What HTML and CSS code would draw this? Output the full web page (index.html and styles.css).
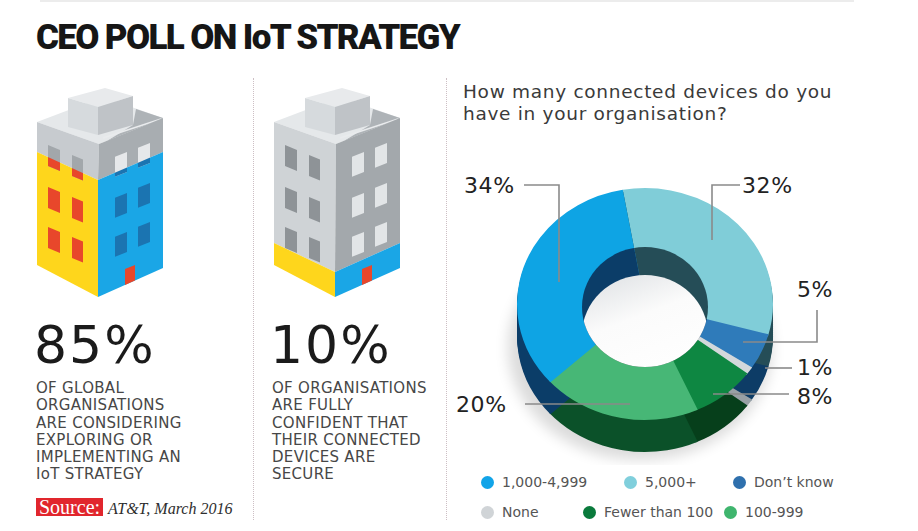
FILE: index.html
```html
<!DOCTYPE html>
<html lang="en">
<head>
<meta charset="utf-8">
<title>CEO Poll on IoT Strategy</title>
<link rel="stylesheet" href="styles.css">
</head>
<body>
<div class="topbar"></div>
<main class="page">
  <h1 class="title">CEO POLL ON IoT STRATEGY</h1>
  <div class="row">
    <section class="col col1">
      <svg class="bldg" viewBox="0 0 130 215" width="130" height="215">
        <defs>
          <clipPath id="b1L"><polygon points="0,67 61,95 61,212 0,180"/></clipPath>
          <clipPath id="b1R"><polygon points="61,95 126,67 126,183 61,212"/></clipPath>
        </defs>
        <polygon class="roof" points="0,37 66,12 126,33 62,59"/>
        <polygon class="wedge" points="99,24 126,33 70,56 96,40"/>
        <line class="roofline" x1="66" y1="53" x2="124" y2="34"/>
        <polygon class="box-top" points="31,13 68,3 96,11 61,22"/>
        <polygon class="box-l" points="31,13 61,22 61,50 31,42"/>
        <polygon class="box-r" points="61,22 96,11 96,40 61,50"/>
        <polygon class="b1-wl" points="0,37 62,59 61,95 0,67"/>
        <polygon class="yellow" points="0,67 61,95 61,212 0,180"/>
        <polygon class="b1-wr" points="62,59 126,33 126,67 61,95"/>
        <polygon class="blue" points="61,95 126,67 126,183 61,212"/>
        <g class="b1-winl-up">
          <polygon points="11,60 23,65 23,86 11,81"/>
          <polygon points="35,70 46,74.6 46,95.6 35,91"/>
        </g>
        <g class="red" clip-path="url(#b1L)">
          <polygon points="11,60 23,65 23,86 11,81"/>
          <polygon points="11,102 23,107 23,128 11,123"/>
          <polygon points="11,142 23,147 23,168 11,163"/>
          <polygon points="35,70 46,74.6 46,95.6 35,91"/>
          <polygon points="35,112 46,116.6 46,137.6 35,133"/>
          <polygon points="35,152 46,156.6 46,177.6 35,173"/>
        </g>
        <g class="b1-winr-up">
          <polygon points="78,71.8 90,67 90,87 78,91.8"/>
          <polygon points="101,62.8 113,58 113,78 101,82.8"/>
        </g>
        <g class="winblue" clip-path="url(#b1R)">
          <polygon points="78,71.8 90,67 90,87 78,91.8"/>
          <polygon points="78,112.8 90,108 90,128 78,132.8"/>
          <polygon points="78,151.8 90,147 90,167 78,171.8"/>
          <polygon points="101,62.8 113,58 113,78 101,82.8"/>
          <polygon points="101,102.8 113,98 113,118 101,122.8"/>
          <polygon points="101,141.8 113,137 113,157 101,161.8"/>
        </g>
        <polygon class="red" points="88,184 98,180 98,195.5 88,200"/>
      </svg>
      <div class="big">85%</div>
      <p class="desc">OF GLOBAL<br>ORGANISATIONS<br>ARE CONSIDERING<br>EXPLORING OR<br>IMPLEMENTING AN<br>IoT STRATEGY</p>
      <div class="source"><span class="src-tag">Source:</span><span class="src-text">AT&amp;T, March 2016</span></div>
    </section>

    <section class="col col2">
      <svg class="bldg bldg2" viewBox="0 0 130 215" width="130" height="215">
        <polygon class="roof" points="0,37 66,12 126,33 62,59"/>
        <polygon class="wedge" points="99,24 126,33 70,56 96,40"/>
        <line class="roofline" x1="66" y1="53" x2="124" y2="34"/>
        <polygon class="box-top" points="31,13 68,3 96,11 61,22"/>
        <polygon class="box-l" points="31,13 61,22 61,50 31,42"/>
        <polygon class="box-r" points="61,22 96,11 96,40 61,50"/>
        <polygon class="b2-wl" points="0,37 62,59 61,187 0,158"/>
        <polygon class="yellow" points="0,158 61,187 61,212 0,180"/>
        <polygon class="b2-wr" points="62,59 126,33 126,158 61,187"/>
        <polygon class="blue" points="61,187 126,158 126,183 61,212"/>
        <g class="b2-winl">
          <polygon points="11,60 23,65 23,86 11,81"/>
          <polygon points="11,102 23,107 23,128 11,123"/>
          <polygon points="11,142 23,147 23,168 11,163"/>
          <polygon points="35,70 46,74.6 46,95.6 35,91"/>
          <polygon points="35,112 46,116.6 46,137.6 35,133"/>
          <polygon points="35,152 46,156.6 46,177.6 35,173"/>
        </g>
        <g class="b2-winr">
          <polygon points="78,71.8 90,67 90,87 78,91.8"/>
          <polygon points="78,112.8 90,108 90,128 78,132.8"/>
          <polygon points="78,151.8 90,147 90,167 78,171.8"/>
          <polygon points="101,62.8 113,58 113,78 101,82.8"/>
          <polygon points="101,102.8 113,98 113,118 101,122.8"/>
          <polygon points="101,141.8 113,137 113,157 101,161.8"/>
        </g>
        <polygon class="red" points="88,184 98,180 98,195.5 88,200"/>
      </svg>
      <div class="big">10%</div>
      <p class="desc">OF ORGANISATIONS<br>ARE FULLY<br>CONFIDENT THAT<br>THEIR CONNECTED<br>DEVICES ARE<br>SECURE</p>
    </section>

    <section class="col col3">
      <p class="question">How many connected devices do you<br>have in your organisation?</p>
      <svg class="chart" viewBox="447 160 410 305" width="410" height="305">
        <defs>
          <filter id="soft" x="-30%" y="-30%" width="160%" height="160%"><feGaussianBlur stdDeviation="7"/></filter>
          <linearGradient id="holeGrad" x1="0" y1="0" x2="0.4" y2="1">
            <stop offset="0" stop-color="#dcdfe2"/>
            <stop offset="0.45" stop-color="#fbfbfb"/>
            <stop offset="1" stop-color="#ffffff"/>
          </linearGradient>
          <clipPath id="hole"><ellipse cx="645" cy="307" rx="63" ry="60"/></clipPath>
          <g id="pieDark" transform="translate(645 304) scale(1 0.906) rotate(-100)">
            <circle class="seg d32" r="64" pathLength="100" stroke-dasharray="32.3 100" stroke-dashoffset="0"/>
            <circle class="seg d5" r="64" pathLength="100" stroke-dasharray="5.3 100" stroke-dashoffset="-32"/>
            <circle class="seg d1" r="64" pathLength="100" stroke-dasharray="1.3 100" stroke-dashoffset="-37"/>
            <circle class="seg d8" r="64" pathLength="100" stroke-dasharray="8.3 100" stroke-dashoffset="-38"/>
            <circle class="seg d20" r="64" pathLength="100" stroke-dasharray="20.3 100" stroke-dashoffset="-46"/>
            <circle class="seg d34" r="64" pathLength="100" stroke-dasharray="34.3 100" stroke-dashoffset="-66"/>
          </g>
        </defs>
        <ellipse class="shadow" cx="640" cy="348" rx="132" ry="112" filter="url(#soft)"/>
        <use href="#pieDark" y="2"/>
        <use href="#pieDark" y="4"/>
        <use href="#pieDark" y="6"/>
        <use href="#pieDark" y="8"/>
        <use href="#pieDark" y="10"/>
        <use href="#pieDark" y="12"/>
        <use href="#pieDark" y="14"/>
        <use href="#pieDark" y="16"/>
        <use href="#pieDark" y="18"/>
        <use href="#pieDark" y="20"/>
        <use href="#pieDark" y="22"/>
        <use href="#pieDark" y="24"/>
        <use href="#pieDark" y="26"/>
        <use href="#pieDark" y="28"/>
        <use href="#pieDark" y="30"/>
        <use href="#pieDark" y="32"/>
        <g transform="translate(645 304) scale(1 0.906) rotate(-100)">
          <circle class="seg t32" r="64" pathLength="100" stroke-dasharray="32.3 100" stroke-dashoffset="0"/>
          <circle class="seg t5" r="64" pathLength="100" stroke-dasharray="5.3 100" stroke-dashoffset="-32"/>
          <circle class="seg t1" r="64" pathLength="100" stroke-dasharray="1.3 100" stroke-dashoffset="-37"/>
          <circle class="seg t8" r="64" pathLength="100" stroke-dasharray="8.3 100" stroke-dashoffset="-38"/>
          <circle class="seg t20" r="64" pathLength="100" stroke-dasharray="20.3 100" stroke-dashoffset="-46"/>
          <circle class="seg t34" r="64" pathLength="100" stroke-dasharray="34.3 100" stroke-dashoffset="-66"/>
        </g>
        <g clip-path="url(#hole)">
          <use href="#pieDark"/>
          <ellipse cx="645" cy="335" rx="63" ry="60" fill="url(#holeGrad)"/>
        </g>
        <g class="leader">
          <polyline points="524,185 559,185 559,282"/>
          <polyline points="740,185 712,185 712,240"/>
          <polyline points="817,310 817,342 743,342"/>
          <line x1="765" y1="368" x2="792" y2="368"/>
          <line x1="713" y1="394" x2="789" y2="394"/>
          <line x1="525" y1="404" x2="630" y2="404"/>
        </g>
        <text class="lbl" x="464" y="193">34%</text>
        <text class="lbl" x="742" y="193">32%</text>
        <text class="lbl" x="797" y="297">5%</text>
        <text class="lbl" x="797" y="375">1%</text>
        <text class="lbl" x="797" y="404">8%</text>
        <text class="lbl" x="456" y="412">20%</text>
      </svg>
      <div class="legend">
        <div class="lrow lrow1">
          <span class="li"><i class="dot c34"></i>1,000-4,999</span>
          <span class="li"><i class="dot c32"></i>5,000+</span>
          <span class="li"><i class="dot c5"></i>Don’t know</span>
        </div>
        <div class="lrow lrow2">
          <span class="li"><i class="dot c1"></i>None</span>
          <span class="li"><i class="dot c8"></i>Fewer than 100</span>
          <span class="li"><i class="dot c20"></i>100-999</span>
        </div>
      </div>
    </section>
  </div>
</main>
</body>
</html>
```

FILE: styles.css
```css
* { box-sizing: border-box; }
html, body { margin: 0; padding: 0; background: #ffffff; }
body {
  width: 918px;
  height: 531px;
  overflow: hidden;
  font-family: "DejaVu Sans", "Noto Sans", sans-serif;
  color: #333;
}
.topbar { height: 2px; margin: 0 64px 0 40px; background: #ececec; }
.page { padding-left: 36px; }
.title {
  margin: 18px 0 0;
  font-family: Roboto, "Liberation Sans", sans-serif;
  font-weight: 900;
  font-size: 35px;
  line-height: 35px;
  letter-spacing: -1.65px;
  color: #161616;
  white-space: nowrap;
}
.row { display: flex; margin-top: 23px; height: 442px; }
.col1 { width: 217px; padding-top: 7px; }
.col2 { width: 193px; padding-top: 7px; padding-left: 18px; border-left: 1px dotted #cdbfc4; }
.col3 { flex: 1; padding-top: 3px; border-left: 1px dotted #cdbfc4; }

.bldg { display: block; margin-left: 1px; }
.bldg2 { margin-left: 2px; }
.roof { fill: #e5e8ea; }
.wedge { fill: #aeb3b7; }
.roofline { stroke: #e9ebed; stroke-width: 1.5px; }
.box-top { fill: #e8eaec; }
.box-l { fill: #d6dadd; }
.box-r { fill: #bfc3c7; }
.yellow { fill: #fed61c; }
.blue { fill: #1aa6e6; }
.red { fill: #e8472b; }
.winblue { fill: #1b74b1; }
.b1-wl { fill: #c7cbcf; }
.b1-wr { fill: #a8adb1; }
.b1-winl-up { fill: #a2a7ab; }
.b1-winr-up { fill: #e6e8ea; }
.b2-wl { fill: #cfd3d6; }
.b2-wr { fill: #a3a8ac; }
.b2-winl { fill: #8e9397; }
.b2-winr { fill: #e2e5e7; }

.big {
  margin: 19px 0 0 -2px;
  font-size: 52px;
  line-height: 52px;
  letter-spacing: 2px;
  color: #1b1b1b;
  white-space: nowrap;
}
.desc {
  margin: 9px 0 0;
  font-size: 15px;
  line-height: 17.3px;
  letter-spacing: 0.3px;
  color: #474747;
  white-space: nowrap;
}
.source {
  display: flex;
  align-items: baseline;
  margin-top: 14px;
  font-family: "Liberation Serif", "DejaVu Serif", serif;
}
.src-tag {
  display: inline-block;
  height: 18px;
  padding: 0 3px;
  background: #e1262d;
  color: #fff;
  font-size: 20px;
  line-height: 18px;
}
.src-text { margin-left: 5px; font-style: italic; font-size: 16px; color: #2e2e2e; }

.question {
  margin: 0;
  padding-left: 16px;
  font-size: 18.5px;
  line-height: 22px;
  letter-spacing: 0.7px;
  color: #3a3a3a;
  white-space: nowrap;
}
.chart { display: block; margin-top: 35px; }
.seg { fill: none; stroke-width: 128px; }
.t32 { stroke: #80cdd8; }
.t5 { stroke: #2f7bba; }
.t1 { stroke: #d3d8db; }
.t8 { stroke: #0e8742; }
.t20 { stroke: #47b776; }
.t34 { stroke: #0ea4e4; }
.d32 { stroke: #254d57; }
.d5 { stroke: #0d3c66; }
.d1 { stroke: #98a0a5; }
.d8 { stroke: #063f1b; }
.d20 { stroke: #0b5129; }
.d34 { stroke: #0b3d68; }
.shadow { fill: #000; opacity: 0.14; }
.leader { fill: none; stroke: #8a8a8a; stroke-width: 1.6px; }
.lbl { font-family: "DejaVu Sans", sans-serif; font-size: 22px; letter-spacing: 0.6px; fill: #222; }

.legend { margin-top: 2px; padding-left: 34px; }
.lrow { display: grid; height: 30px; align-items: center; font-size: 14px; color: #555; white-space: nowrap; }
.lrow1 { grid-template-columns: 143px 109px auto; }
.lrow2 { grid-template-columns: 102px 141px auto; }
.li { display: flex; align-items: center; }
.dot { display: inline-block; width: 13px; height: 13px; border-radius: 50%; margin-right: 8px; flex: none; }
.c34 { background: #12a4e8; }
.c32 { background: #80cfdc; }
.c5 { background: #2f70ad; }
.c1 { background: #d0d4d7; }
.c8 { background: #0a7a3c; }
.c20 { background: #3fb56e; }
```
